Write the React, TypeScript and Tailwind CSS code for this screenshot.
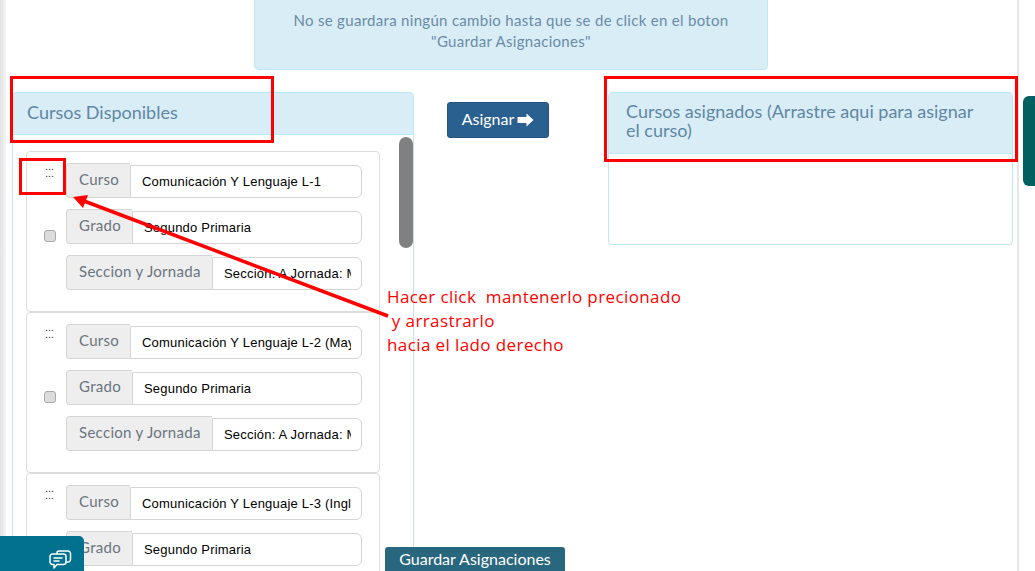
const courses = [
  { curso: 'Comunicación Y Lenguaje L-1' },
  { curso: 'Comunicación Y Lenguaje L-2 (Maya)' },
  { curso: 'Comunicación Y Lenguaje L-3 (Inglés)' },
];

const headingFont = "font-['Lato','Noto_Sans',sans-serif]";

function Field({ label, value, labelWidth, indent }: { label: string; value: string; labelWidth: string; indent: string }) {
  return (
    <div className="flex h-[35px] w-[296px]">
      <span className={`${labelWidth} ${headingFont} shrink-0 h-[35px] pl-3 pt-[5px] text-[15px] leading-[20px] tracking-[0.3px] text-[#6b747d] bg-[#eeeeee] border border-r-0 border-[#d5d5d5] rounded-l-[4px] whitespace-nowrap`}>
        {label}
      </span>
      <input
        readOnly
        value={value}
        className={`${indent} flex-1 min-w-0 h-[33px] mt-[2px] pr-[10px] bg-white border border-[#d5d5d5] rounded-r-[6px] outline-none font-['Liberation_Sans',Arial,sans-serif] text-[13px] tracking-[0.2px] text-black`}
      />
    </div>
  );
}

function CourseCard({ curso }: { curso: string }) {
  return (
    <div className="h-[161px] w-[354px] shrink-0 flex bg-white border border-[#dddddd] rounded-[4px]">
      <div className="w-[39px] shrink-0 relative flex justify-end pr-[10px]">
        <span className="absolute left-[18px] top-[11px] font-['Liberation_Sans',sans-serif] text-[11px] leading-[7px] text-[#333333] whitespace-pre">
          {'...\n...'}
        </span>
        <input
          type="checkbox"
          readOnly
          className="appearance-none mt-[78px] h-[12px] w-[12px] rounded-[3px] bg-[#dcdcdc] border border-[#a9a9a9]"
        />
      </div>
      <div className="pt-[11px] flex flex-col gap-[11px]">
        <Field label="Curso" value={curso} labelWidth="w-[64px]" indent="pl-[11px]" />
        <Field label="Grado" value="Segundo Primaria" labelWidth="w-[66px]" indent="pl-[11px]" />
        <Field label="Seccion y Jornada" value="Sección: A Jornada: Matutina" labelWidth="w-[146px]" indent="pl-[11px]" />
      </div>
    </div>
  );
}

export default function App() {
  return (
    <div className="relative w-[1035px] h-[571px] overflow-hidden bg-white flex">
      <div className="w-[6px] shrink-0 bg-gradient-to-r from-[#e4e4e4] to-[#f4f4f4]" />

      <div className="w-[1013px] shrink-0 border-r-2 border-[#e6e6e6]">
        {/* Aviso */}
        <div className={`${headingFont} ml-[248px] w-[514px] h-[70px] pt-[10px] text-center text-[15px] leading-[21px] tracking-[0.3px] text-[#6a8ba6] bg-[#d9edf7] border border-t-0 border-[#bce8f1] rounded-b-[5px]`}>
          No se guardara ningún cambio hasta que se de click en el boton
          <br />
          "Guardar Asignaciones"
        </div>

        <div className="flex mt-[22px]">
          {/* Cursos disponibles */}
          <div className="ml-[6px] w-[402px] shrink-0">
            <div className={`${headingFont} h-[43px] pl-[14px] pt-[8px] text-[18px] leading-[22px] tracking-[0px] text-[#5f87a3] bg-[#d9edf7] border border-[#bce8f1] rounded-t-[4px]`}>
              Cursos Disponibles
            </div>
            <div className="relative h-[460px] border-x border-[#bce8f1] pl-[13px] pt-[16px] flex flex-col overflow-hidden">
              <div className="absolute right-0 top-[2px] h-[111px] w-[14px] rounded-[7px] bg-[#808080]" />
              {courses.map((c) => (
                <CourseCard key={c.curso} curso={c.curso} />
              ))}
            </div>
          </div>

          {/* Acciones */}
          <div className="w-[194px] shrink-0 relative">
            <button className={`${headingFont} ml-[33px] mt-[10px] h-[36px] w-[102px] pb-[2px] flex items-center justify-center gap-[3px] text-[16px] text-white bg-[#2a6090] border border-[#245580] rounded-[3px]`}>
              Asignar
              <svg className="mt-[2px]" width="17" height="14" viewBox="0 0 17 14" fill="currentColor">
                <path d="M9.500 0.500L16.500 7l-7 6.500V10H0.500V4h9z" />
              </svg>
            </button>
            <button className={`${headingFont} absolute left-[-29px] top-[455px] h-[24px] w-[180px] text-[16px] leading-[24px] text-white bg-[#29677f] rounded-t-[3px]`}>
              Guardar Asignaciones
            </button>
          </div>

          {/* Cursos asignados */}
          <div className="w-[405px] h-[153px] shrink-0 flex flex-col border border-[#bce8f1] rounded-[4px] overflow-hidden">
            <div className={`${headingFont} h-[61px] pl-[17px] pt-[9px] pr-[30px] text-[18px] leading-[19px] tracking-[0px] text-[#5f87a3] bg-[#d9edf7] border-b border-[#bce8f1]`}>
              Cursos asignados (Arrastre aqui para asignar el curso)
            </div>
          </div>
        </div>
      </div>

      {/* Pestaña derecha */}
      <div className="absolute right-0 top-[96px] h-[90px] w-[12px] bg-[#00605f] rounded-l-[6px]" />

      {/* Chat */}
      <div className="absolute left-0 bottom-0 w-[84px] h-[35px] bg-[#00728f] rounded-tr-[5px] text-white">
        <svg className="absolute left-[49px] top-[14px]" width="23" height="21" viewBox="0 0 23 21" fill="none" stroke="currentColor" strokeWidth="1.500" strokeLinejoin="round" strokeLinecap="round">
          <path d="M8 3.500V3a2 2 0 0 1 2-2h9a2.500 2.500 0 0 1 2.500 2.500v6a2.500 2.500 0 0 1-2.500 2.500h-1" />
          <path d="M3.500 4h11A2.500 2.500 0 0 1 17 6.500V12a2.500 2.500 0 0 1-2.500 2.500H8L5 18v-3.500H3.500A2.500 2.500 0 0 1 1 12V6.500A2.500 2.500 0 0 1 3.500 4z" />
          <path d="M5 8h8M5 11h5" />
        </svg>
      </div>

      {/* Anotaciones */}
      <div className="absolute left-[10px] top-[76px] w-[264px] h-[67px] border-[3px] border-[#ff0000]" />
      <div className="absolute left-[19px] top-[158px] w-[47px] h-[37px] border-[3px] border-[#ff0000]" />
      <div className="absolute left-[604px] top-[76px] w-[414px] h-[86px] border-[3px] border-[#ff0000]" />
      <svg className="absolute left-0 top-0 pointer-events-none" width="1035" height="571">
        <line x1="388" y1="316" x2="84" y2="201" stroke="#ff0000" strokeWidth="3.500" />
        <polygon points="73,197 88,195 83,208" fill="#ff0000" />
      </svg>
      <div className="absolute left-[387px] top-[285px] font-['Open_Sans',sans-serif] text-[17px] leading-[24px] tracking-[0.4px] text-[#ff0000] whitespace-pre">
        {'Hacer click  mantenerlo precionado\n y arrastrarlo\nhacia el lado derecho'}
      </div>
    </div>
  );
}
